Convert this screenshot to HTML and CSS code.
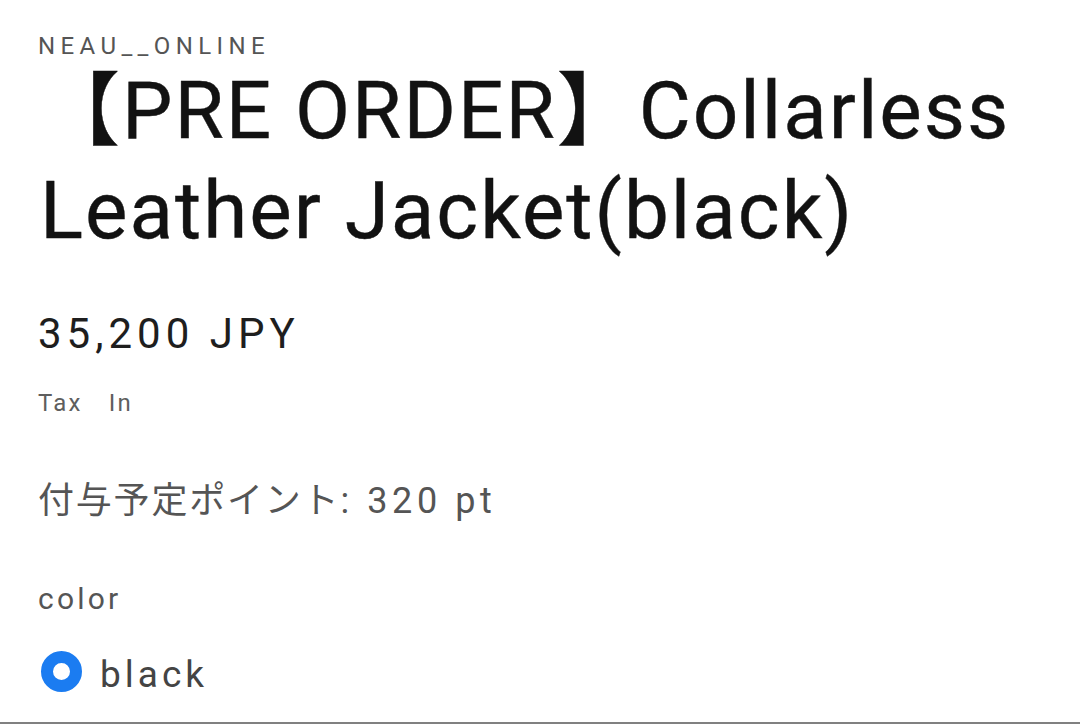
FILE: index.html
```html
<!DOCTYPE html>
<html lang="ja">
<head>
<meta charset="utf-8">
<title>【PRE ORDER】Collarless Leather Jacket(black)</title>
<link rel="stylesheet" href="styles.css">
</head>
<body>
<main class="product">
  <p class="vendor">NEAU__ONLINE</p>
  <h1 class="title">【PRE ORDER】Collarless Leather Jacket(black)</h1>
  <p class="price">35,200 JPY</p>
  <p class="tax">Tax　In</p>
  <p class="points">付与予定ポイント<span class="points-value">: 320 pt</span></p>
  <fieldset class="variant">
    <legend class="variant-label">color</legend>
    <label class="option">
      <span class="radio"></span>
      <span class="option-text">black</span>
    </label>
  </fieldset>
  <div class="divider"></div>
</main>
</body>
</html>
```
FILE: styles.css
```css
html, body {
  margin: 0;
  padding: 0;
  background: #ffffff;
}
body {
  font-family: Roboto, "Noto Sans CJK JP", sans-serif;
  color: #121212;
  width: 1080px;
  height: 724px;
  overflow: hidden;
}
.product {
  padding: 31px 0 0 38px;
}
.vendor {
  margin: 0;
  font-size: 24px;
  line-height: 30px;
  letter-spacing: 5.4px;
  color: #555555;
}
.title {
  margin: 0 0 0 2px;
  font-weight: 400;
  font-size: 80px;
  line-height: 100px;
  letter-spacing: 2px;
  color: #121212;
  -webkit-text-stroke: 0.4px #121212;
}
.price {
  margin: 48px 0 0 0;
  font-size: 42px;
  line-height: 50px;
  letter-spacing: 5px;
  color: #1e1e1e;
}
.tax {
  margin: 29px 0 0 0;
  font-size: 24px;
  line-height: 30px;
  letter-spacing: 2.2px;
  color: #5e5e5e;
}
.points {
  margin: 61px 0 0 0;
  font-size: 36px;
  line-height: 44px;
  letter-spacing: 1.8px;
  color: #555555;
}
.points-value {
  letter-spacing: 4.6px;
}
.variant {
  margin: 56px 0 0 0;
  padding: 0;
  border: 0;
}
.variant-label {
  padding: 0;
  font-size: 30px;
  line-height: 40px;
  letter-spacing: 3.2px;
  color: #555555;
}
.option {
  display: flex;
  align-items: flex-start;
  gap: 18px;
  height: 44px;
  margin-top: 34px;
}
.radio {
  box-sizing: border-box;
  width: 41px;
  height: 41px;
  margin: -2px 0 0 3px;
  border-radius: 50%;
  border: 12px solid #1b7cf1;
  background: #ffffff;
}
.option-text {
  font-size: 37px;
  line-height: 44px;
  letter-spacing: 4px;
  color: #444444;
}
.divider {
  margin: 25px 0 0 -38px;
  border-top: 2px solid #808080;
  width: 1080px;
}
```
